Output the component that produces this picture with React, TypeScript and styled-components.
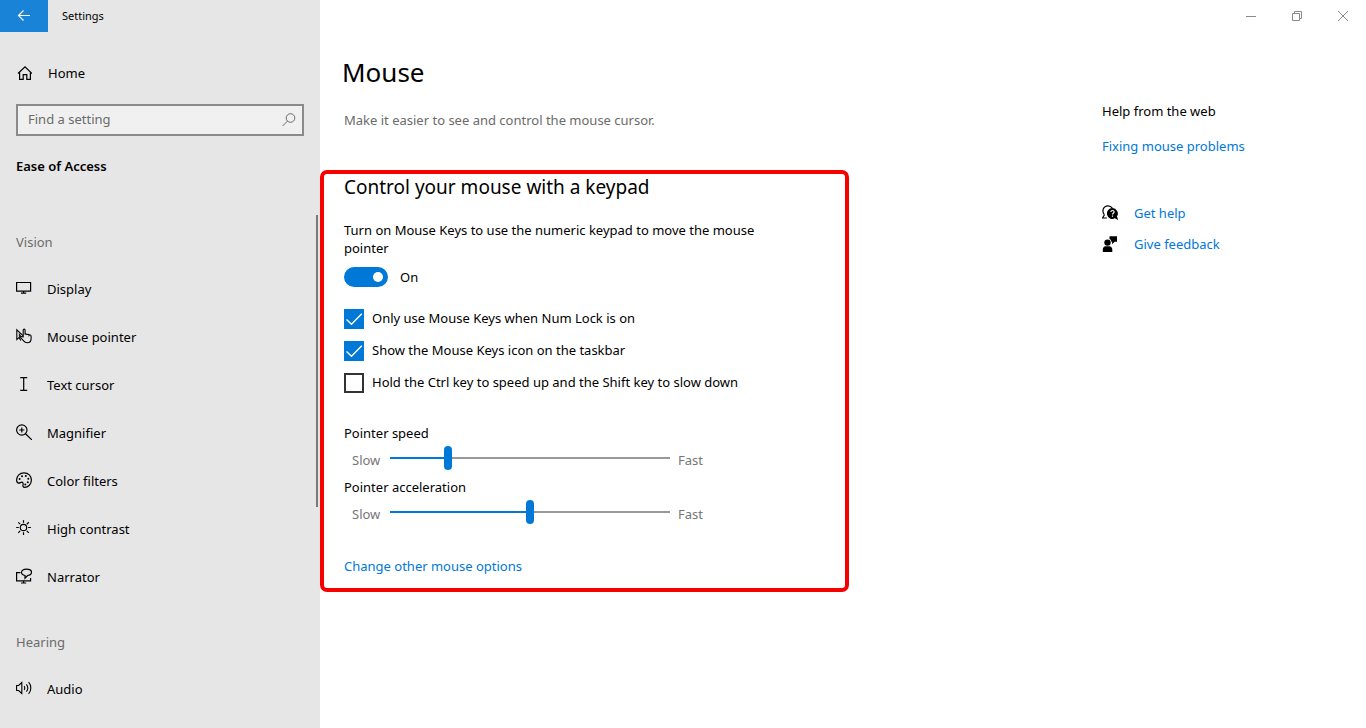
import React, { useId, useState } from "react";
import styled, { createGlobalStyle } from "styled-components";

const GlobalStyle = createGlobalStyle`
  *, *::before, *::after { box-sizing: border-box; }
  body {
    margin: 0;
    background: #fff;
    color: #000;
    font-family: "Noto Sans", "Open Sans", sans-serif;
    font-size: 13px;
    line-height: 18px;
  }
  button, input { font: inherit; color: inherit; }
  h1, h2, h3, p, ul { margin: 0; padding: 0; font-weight: 400; }
`;

const Window = styled.div`
  display: flex;
  min-height: 100vh;
`;

/* ---------- Sidebar ---------- */

const Sidebar = styled.aside`
  flex: 0 0 320px;
  background: #e6e6e6;
`;

const TitleBar = styled.header`
  display: flex;
  align-items: center;
  gap: 14px;
  height: 32px;
  font-size: 11px;
`;

const BackButton = styled.button`
  display: grid;
  place-items: center;
  width: 48px;
  height: 32px;
  padding: 0;
  border: 0;
  background: #1883d7;
  color: #fff;
`;

const NavLink = styled.a`
  display: flex;
  align-items: center;
  gap: 15px;
  height: 48px;
  padding: 0 16px;
  color: #000;
  text-decoration: none;

  svg { margin-bottom: 2px; }
`;

const HomeLink = styled(NavLink)`
  gap: 16px;
  margin-top: 17px;
  svg { margin-bottom: 0; }
`;

const SearchBox = styled.form`
  display: flex;
  align-items: center;
  height: 32px;
  margin: 7px 16px 0;
  padding-right: 5px;
  border: 2px solid #8a8a8a;
  background: #f0f0f0;
  color: #6b6b6b;
`;

const SearchInput = styled.input`
  flex: 1;
  min-width: 0;
  padding: 0 10px 2px;
  border: 0;
  outline: 0;
  background: transparent;

  &::placeholder { color: #6b6b6b; opacity: 1; }
`;

const SearchButton = styled.button`
  display: grid;
  padding: 0;
  border: 0;
  background: none;
`;

const Category = styled.h2`
  margin: 21px 16px 40px;
  font-size: 13px;
  font-weight: 600;
  line-height: 18px;
`;

const NavScroller = styled.nav`
  position: relative;
  padding-top: 18px;
`;

const ScrollThumb = styled.div`
  position: absolute;
  top: 0;
  right: 2px;
  width: 2px;
  height: 292px;
  background: #7a7a7a;
`;

const GroupTitle = styled.h3`
  margin: 0 16px 14px;
  color: #6b6b6b;
  font-size: 13px;
`;

const NavList = styled.ul`
  list-style: none;

  & + ${GroupTitle} { margin-top: 32px; }
`;

/* ---------- Main pane ---------- */

const Main = styled.main`
  flex: 1;
  min-width: 0;
`;

const CaptionBar = styled.div`
  display: flex;
  justify-content: flex-end;
  height: 32px;
`;

const CaptionButton = styled.button`
  display: grid;
  place-items: center;
  width: 46px;
  padding: 0;
  border: 0;
  background: none;
  color: #8a8a8a;
`;

const Columns = styled.div`
  display: flex;
  justify-content: space-between;
  gap: 24px;
`;

const Content = styled.div`
  flex: 0 1 529px;
`;

const PageTitle = styled.h1`
  margin: 22px 22px 0;
  font-size: 26px;
  line-height: 36px;
`;

const Intro = styled.p`
  margin: 21px 24px 41px;
  color: #6b6b6b;
`;

const Highlight = styled.section`
  padding: 0 20px 13px;
  border: 4px solid #f60000;
  border-radius: 7px;
`;

const SectionTitle = styled.h2`
  margin-bottom: 21px;
  font-size: 19px;
  line-height: 26px;
`;

const Description = styled.p`
  max-width: 440px;
`;

const ToggleRow = styled.label`
  display: flex;
  align-items: center;
  gap: 12px;
  height: 20px;
  margin: 10px 0 22px;
`;

const Toggle = styled.input`
  display: flex;
  align-items: center;
  appearance: none;
  width: 44px;
  height: 20px;
  margin: 0;
  padding: 0 5px;
  border-radius: 10px;
  background: #8a8a8a;

  &::before {
    content: "";
    width: 10px;
    height: 10px;
    border-radius: 50%;
    background: #fff;
  }
  &:checked {
    justify-content: flex-end;
    background: #0078d7;
  }
`;

const CheckList = styled.div`
  display: grid;
  gap: 12px;
  margin-bottom: 31px;
`;

const CheckLabel = styled.label`
  display: flex;
  align-items: flex-start;
  gap: 8px;
  height: 20px;
`;

const CheckCell = styled.span`
  display: grid;
  & > * { grid-area: 1 / 1; }
  svg { pointer-events: none; }
`;

const CheckInput = styled.input`
  appearance: none;
  width: 20px;
  height: 20px;
  margin: 0;
  border: 2px solid #333;
  background: #fff;

  &:checked {
    border-color: #0078d7;
    background: #0078d7;
  }
`;

const SliderField = styled.div`
  margin-bottom: 8px;
`;

const SliderLabel = styled.label`
  display: block;
  margin-bottom: 4px;
`;

const SliderRow = styled.div`
  display: flex;
  gap: 8px;
  height: 24px;
  padding-left: 8px;
`;

const SliderEnd = styled.span<{ $width?: number }>`
  flex: none;
  width: ${(p) => (p.$width ? `${p.$width}px` : "auto")};
  padding-top: 5px;
  color: #767676;
`;

const Range = styled.input`
  appearance: none;
  flex: 0 1 280px;
  min-width: 0;
  height: 24px;
  margin: 0;
  background: linear-gradient(
      to right,
      #0078d7 var(--fill),
      #999 var(--fill)
    )
    center / 100% 2px no-repeat;

  &::-webkit-slider-thumb {
    appearance: none;
    width: 8px;
    height: 24px;
    border-radius: 4px;
    background: #0078d7;
  }
`;

const TextLink = styled.a`
  color: #0078d7;
  text-decoration: none;
`;

const OptionsLink = styled(TextLink)`
  display: block;
  margin-top: 33px;
`;

const Help = styled.aside`
  flex: 0 0 264px;
  padding-top: 70px;
`;

const HelpTopic = styled(TextLink)`
  display: block;
  margin: 17px 0 49px;
`;

const HelpAction = styled(TextLink)`
  display: flex;
  align-items: center;
  gap: 16px;
  margin-bottom: 13px;

  svg { color: #000; }
`;

/* ---------- Icons ---------- */

type IconProps = { children: React.ReactNode; size?: number; stroke?: number };

const Icon = ({ children, size = 16, stroke = 1 }: IconProps) => (
  <svg
    width={size}
    height={size}
    viewBox={`0 0 ${size} ${size}`}
    fill="none"
    stroke="currentColor"
    strokeWidth={stroke}
    aria-hidden="true"
  >
    {children}
  </svg>
);

const icons = {
  back: (
    <Icon stroke={1.2}>
      <path d="M14 7.5H2.5M7.5 2.5l-5 5 5 5" />
    </Icon>
  ),
  home: (
    <Icon stroke={1.2}>
      <path d="M2 8.5 9 1.8l7 6.7M3.6 7v7.4h3.6V9.6h3.6v4.8h3.6V7" />
    </Icon>
  ),
  search: (
    <Icon>
      <circle cx="9.5" cy="6" r="4.3" />
      <path d="M6.4 9.1 1.6 14" />
    </Icon>
  ),
  display: (
    <Icon stroke={1.2}>
      <path d="M.6 2.5h14v8.6H.6zM7.6 11v2M5 13.1h5.2" />
    </Icon>
  ),
  pointer: (
    <Icon stroke={1.1}>
      <path d="M7 7.6.8 1.8v9.8l2.4-2.2 1.5 3" />
      <path d="M3.2 5.5v3.3l2-.2z" fill="currentColor" strokeWidth=".5" />
      <path d="M7.2 8.9V2.2c0-1.4 1.900-1.4 1.900 0v4.400c.3-1 1.900-.9 2 .3.4-.9 1.900-.7 2 .4.5-.8 2-.4 2 .9v2.500c0 2.400-1.600 4-3.900 4-1.800 0-2.700-.7-3.600-1.900L4.800 9.900c-.6-1 .5-1.800 1.300-1.200z" />
    </Icon>
  ),
  cursor: (
    <Icon stroke={1.2}>
      <path d="M4.2 1.6h7M4.2 14.4h7M7.700 1.6v12.8" />
    </Icon>
  ),
  magnifier: (
    <Icon stroke={1.2}>
      <circle cx="5.800" cy="6" r="5.200" />
      <path d="M9.500 9.800 16 16M5.800 3.400v5.200M3.200 6h5.200" />
    </Icon>
  ),
  palette: (
    <Icon stroke={1.2}>
      <path d="M8 .8c4.300 0 7.400 3 7.400 7.200 0 4.300-3.200 7.300-6.800 7.300-1.500 0-1.900-1-1.600-2.200.3-1.300.2-2.700-1-2.900-1.400-.2-1.900 1-3.200.9C1.300 11 .6 9.700.6 8 .6 3.900 3.800.8 8 .8z" />
      <g fill="currentColor" stroke="none">
        <circle cx="3.600" cy="7" r="1" />
        <circle cx="6" cy="4.200" r="1" />
        <circle cx="9.800" cy="4" r="1" />
        <circle cx="12.300" cy="6.800" r="1" />
        <circle cx="11.800" cy="10.200" r="1" />
        <circle cx="9.300" cy="12.500" r="1" />
      </g>
    </Icon>
  ),
  contrast: (
    <Icon stroke={1.2}>
      <circle cx="7.500" cy="7.500" r="3.200" />
      <path d="M7.500.3v2.500M7.500 12.200v2.700M.2 7.500h2.600M12.200 7.500h2.700M2.300 2.300l1.900 1.900M10.800 10.800l2 2M12.800 2.300l-2 1.900M4.200 10.800l-1.900 2" />
    </Icon>
  ),
  narrator: (
    <Icon stroke={1.2}>
      <path d="M4.500 4.700H.6v8.200h14v-3M7.600 12.900v2M5 15h5.200" />
      <path d="M10.500 1.100c2.900 0 5 1.300 5 3.200 0 1.700-1.600 2.900-3.900 3.200L9 10.200V7.500C7 7.200 5.500 6 5.500 4.300c0-1.900 2.100-3.200 5-3.200z" />
    </Icon>
  ),
  audio: (
    <Icon stroke={1.1}>
      <path d="M.6 5.500h2L5.800 2.500v11L2.600 10.500h-2zM8.200 6c.8 1.200.8 2.800 0 4M10.400 4.300c1.700 2.200 1.700 5.200 0 7.400M12.600 2.200c3 3.300 3 8.300 0 11.600" />
    </Icon>
  ),
  help: (
    <Icon stroke={1.2}>
      <path d="M2.400 9.800C-.5 6.300 1.200.8 5.900.8c2 0 3.500.9 4.400 2.300M2.400 9.800.6 13h4.200" />
      <path
        d="M10.500 3.100a5.400 5.400 0 0 1 4.500 8.300l1.200 3.800-3.400-1.900a5.400 5.400 0 1 1-2.300-10.200z"
        fill="currentColor"
        stroke="none"
      />
      <path d="M8.900 7.100c0-2.100 3.200-2.100 3.200-.1 0 1.200-1.600 1.200-1.600 2.500M10.500 10.500v1.300" stroke="#fff" />
    </Icon>
  ),
  feedback: (
    <Icon>
      <g fill="currentColor" stroke="none">
        <circle cx="5.500" cy="6.600" r="3.200" />
        <path d="M.8 16v-2.500c0-2 1.200-3.300 2.800-3.300h3.800c1.700 0 2.900 1.300 2.900 3.300V16zM7.500.3H15v5.400h-2.300l-2.600 2.500V5.700h-.8C9.200 4.400 8.600 3.500 7.500 3z" />
      </g>
    </Icon>
  ),
  minimize: (
    <Icon size={10}>
      <path d="M0 5.500h10" />
    </Icon>
  ),
  restore: (
    <Icon size={10}>
      <path d="M.5 2.500h7v7h-7zM2.500 2.500v-2h7v7h-2" />
    </Icon>
  ),
  close: (
    <Icon size={10}>
      <path d="M0 0l10 10M10 0L0 10" />
    </Icon>
  ),
  check: (
    <Icon size={20} stroke={1.4}>
      <path d="M2.500 10.500 7.500 15.300 17.800 4.800" stroke="#fff" />
    </Icon>
  ),
};

/* ---------- Parts ---------- */

const vision = [
  { label: "Display", icon: icons.display },
  { label: "Mouse pointer", icon: icons.pointer },
  { label: "Text cursor", icon: icons.cursor },
  { label: "Magnifier", icon: icons.magnifier },
  { label: "Color filters", icon: icons.palette },
  { label: "High contrast", icon: icons.contrast },
  { label: "Narrator", icon: icons.narrator },
];

const hearing = [{ label: "Audio", icon: icons.audio }];

const NavItems = ({ items }: { items: typeof vision }) => (
  <NavList>
    {items.map((item) => (
      <li key={item.label}>
        <NavLink href="#">
          {item.icon}
          {item.label}
        </NavLink>
      </li>
    ))}
  </NavList>
);

const Checkbox = ({ label, initial = false }: { label: string; initial?: boolean }) => {
  const [checked, setChecked] = useState(initial);
  return (
    <CheckLabel>
      <CheckCell>
        <CheckInput type="checkbox" checked={checked} onChange={(e) => setChecked(e.target.checked)} />
        {checked && icons.check}
      </CheckCell>
      {label}
    </CheckLabel>
  );
};

const Slider = ({ label, initial }: { label: string; initial: number }) => {
  const id = useId();
  const [value, setValue] = useState(initial);
  return (
    <SliderField>
      <SliderLabel htmlFor={id}>{label}</SliderLabel>
      <SliderRow>
        <SliderEnd $width={30}>Slow</SliderEnd>
        <Range
          id={id}
          type="range"
          value={value}
          onChange={(e) => setValue(Number(e.target.value))}
          style={{ "--fill": `${value}%` } as React.CSSProperties}
        />
        <SliderEnd>Fast</SliderEnd>
      </SliderRow>
    </SliderField>
  );
};

export default function App() {
  const [mouseKeys, setMouseKeys] = useState(true);

  return (
    <>
      <GlobalStyle />
      <Window>
        <Sidebar>
          <TitleBar>
            <BackButton aria-label="Back">{icons.back}</BackButton>
            Settings
          </TitleBar>
          <HomeLink href="#">
            {icons.home}
            Home
          </HomeLink>
          <SearchBox role="search" onSubmit={(e) => e.preventDefault()}>
            <SearchInput type="text" placeholder="Find a setting" aria-label="Find a setting" />
            <SearchButton aria-label="Search">{icons.search}</SearchButton>
          </SearchBox>
          <Category>Ease of Access</Category>
          <NavScroller>
            <GroupTitle>Vision</GroupTitle>
            <NavItems items={vision} />
            <GroupTitle>Hearing</GroupTitle>
            <NavItems items={hearing} />
            <ScrollThumb />
          </NavScroller>
        </Sidebar>

        <Main>
          <CaptionBar>
            <CaptionButton aria-label="Minimize">{icons.minimize}</CaptionButton>
            <CaptionButton aria-label="Restore">{icons.restore}</CaptionButton>
            <CaptionButton aria-label="Close">{icons.close}</CaptionButton>
          </CaptionBar>
          <Columns>
            <Content>
              <PageTitle>Mouse</PageTitle>
              <Intro>Make it easier to see and control the mouse cursor.</Intro>
              <Highlight>
                <SectionTitle>Control your mouse with a keypad</SectionTitle>
                <Description>
                  Turn on Mouse Keys to use the numeric keypad to move the mouse pointer
                </Description>
                <ToggleRow>
                  <Toggle
                    type="checkbox"
                    role="switch"
                    checked={mouseKeys}
                    onChange={(e) => setMouseKeys(e.target.checked)}
                  />
                  {mouseKeys ? "On" : "Off"}
                </ToggleRow>
                <CheckList>
                  <Checkbox label="Only use Mouse Keys when Num Lock is on" initial />
                  <Checkbox label="Show the Mouse Keys icon on the taskbar" initial />
                  <Checkbox label="Hold the Ctrl key to speed up and the Shift key to slow down" />
                </CheckList>
                <Slider label="Pointer speed" initial={20} />
                <Slider label="Pointer acceleration" initial={50} />
                <OptionsLink href="#">Change other mouse options</OptionsLink>
              </Highlight>
            </Content>

            <Help>
              <p>Help from the web</p>
              <HelpTopic href="#">Fixing mouse problems</HelpTopic>
              <HelpAction href="#">
                {icons.help}
                Get help
              </HelpAction>
              <HelpAction href="#">
                {icons.feedback}
                Give feedback
              </HelpAction>
            </Help>
          </Columns>
        </Main>
      </Window>
    </>
  );
}
